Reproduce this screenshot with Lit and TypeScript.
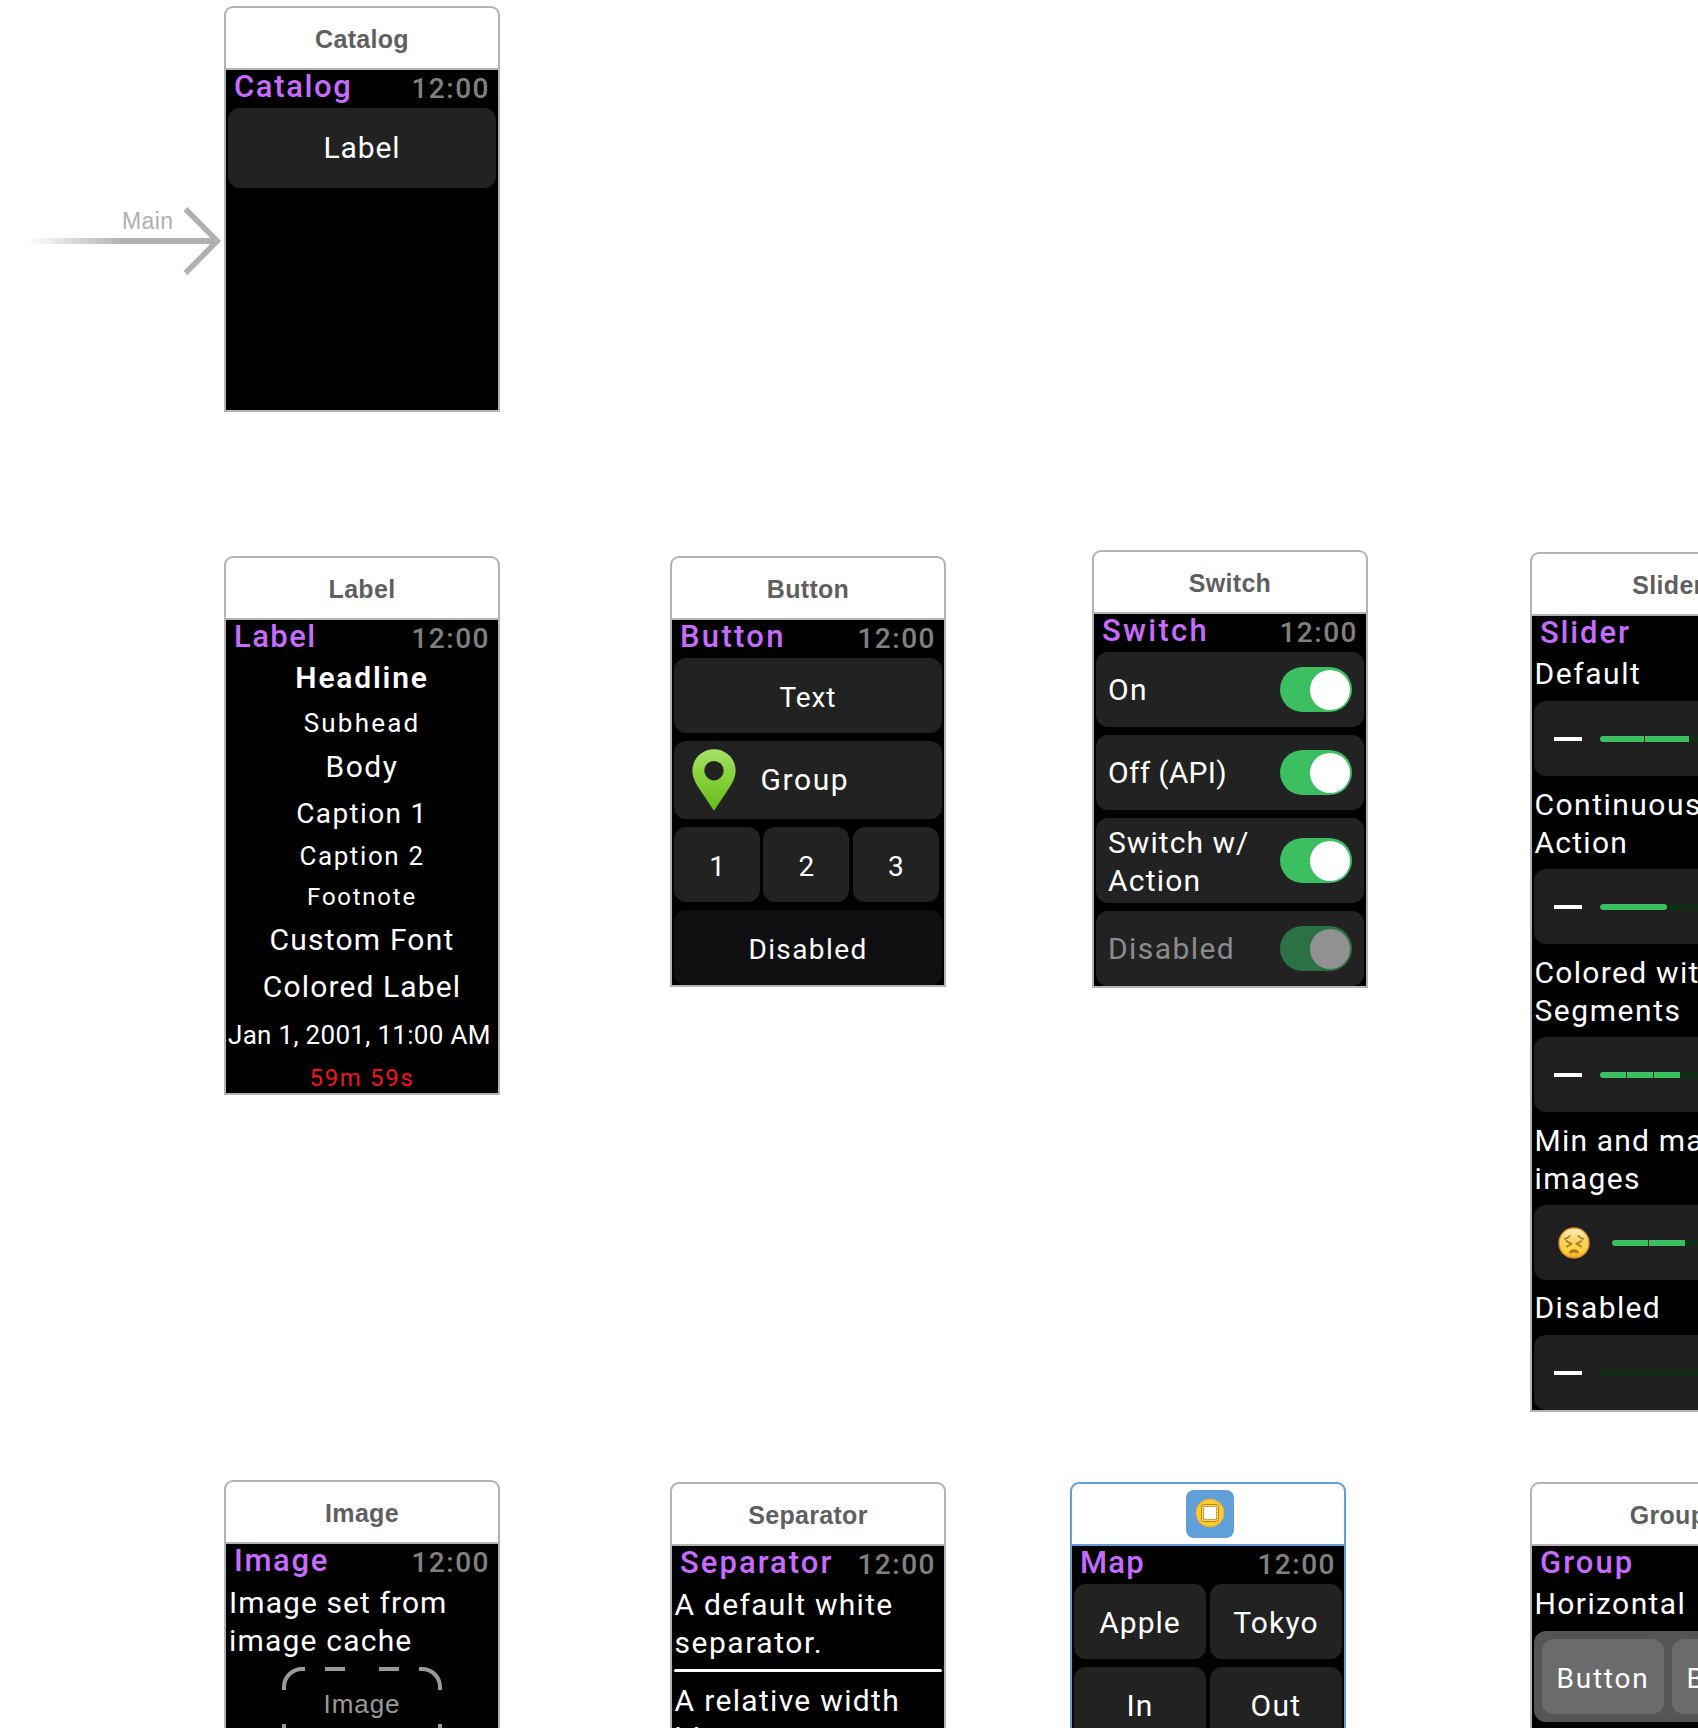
import { LitElement, html, svg, css, nothing, TemplateResult } from "lit";
import { customElement, property } from "lit/decorators.js";
import { classMap } from "lit/directives/class-map.js";
import { styleMap } from "lit/directives/style-map.js";

/** A run of text with its own tracking, in px. */
const run = (text: string, tracking: number) =>
  html`<span style=${styleMap({ letterSpacing: `${tracking}px` })}>${text}</span>`;

const pin = svg`
  <svg class="pin" viewBox="0 0 44 62">
    <defs>
      <linearGradient id="leaf" x1="0" y1="0" x2="0" y2="1">
        <stop offset="0" stop-color="#a5e267" />
        <stop offset="0.45" stop-color="#86d23a" />
        <stop offset="1" stop-color="#67ba1c" />
      </linearGradient>
    </defs>
    <path
      fill="url(#leaf)"
      fill-rule="evenodd"
      d="M22 0.3C9.8 0.3 0.4 9.800 0.4 21.700C0.4 28 3.500 34 7.500 40L22 61.800L36.500 40C40.500 34 43.600 28 43.600 21.700C43.600 9.800 34.200 0.300 22 0.300ZM22 12a9.700 9.700 0 1 1 0 19.400a9.700 9.700 0 1 1 0-19.400Z"
    />
  </svg>`;

const face = svg`
  <svg class="face" viewBox="0 0 32 32">
    <defs>
      <linearGradient id="skin" x1="0" y1="0" x2="0" y2="1">
        <stop offset="0" stop-color="#fff0c0" />
        <stop offset="0.4" stop-color="#fcd468" />
        <stop offset="0.8" stop-color="#fdcf3a" />
        <stop offset="1" stop-color="#f3a52c" />
      </linearGradient>
    </defs>
    <circle cx="16" cy="16" r="15" fill="url(#skin)" stroke="#e2902a" stroke-width="1.400" />
    <g fill="none" stroke="#a87a22" stroke-width="1.900" stroke-linecap="round" stroke-linejoin="round">
      <path d="M6.500 12C8.500 11.800 10.500 10.500 11.800 8.800" stroke-width="1.500" />
      <path d="M25.500 12C23.500 11.800 21.500 10.500 20.200 8.800" stroke-width="1.500" />
      <path d="M8.500 14L13.500 16.800L9 19.500" />
      <path d="M23.500 14L18.500 16.800L23 19.500" />
      <path d="M12 25.500C13 22.300 19 22.300 20 25.500L16 24.300Z" fill="#a87a22" />
    </g>
  </svg>`;

const controllerIcon = svg`
  <svg class="controller" viewBox="0 0 48 48">
    <circle cx="24" cy="23" r="14" fill="#ffcb34" stroke="#e9ad2e" stroke-width="1" />
    <rect x="15.500" y="14.500" width="17" height="17" rx="2" fill="#ffd75e" stroke="#b98b16" stroke-width="1" />
    <rect x="17.500" y="16.500" width="13" height="13" fill="#fff" stroke="#a8851f" stroke-width="1" stroke-dasharray="2 1" />
  </svg>`;

@customElement("scene-status")
export class SceneStatus extends LitElement {
  @property() name = "";
  @property({ type: Number }) tracking = 1.6;

  static styles = css`
    :host {
      display: flex;
      justify-content: space-between;
      align-items: flex-start;
      height: 38px;
      padding: 0 8px 0 8px;
      font-family: Roboto, sans-serif;
      font-weight: 500;
      white-space: nowrap;
    }
    .name {
      font-size: 31px;
      line-height: 34px;
      color: #c76bff;
    }
    .time {
      font-size: 28px;
      line-height: 38px;
      color: #808080;
      letter-spacing: 1.5px;
    }
  `;

  render() {
    return html`<div class="name">${run(this.name, this.tracking)}</div>
      <div class="time">12:00</div>`;
  }
}

@customElement("watch-slider")
export class WatchSlider extends LitElement {
  @property({ type: Number }) segments = 3;
  @property({ type: Number }) value = 0;
  @property({ type: Boolean }) continuous = false;
  @property({ type: Boolean }) images = false;

  static styles = css`
    :host {
      display: flex;
      align-items: center;
      box-sizing: border-box;
      height: 75px;
      margin: 0 2px;
      padding: 0 20px;
      border-radius: 12px;
      background: #1f1f1f;
    }
    .minus {
      flex: none;
      width: 28px;
      height: 4px;
      background: #fff;
    }
    .face {
      flex: none;
      width: 32px;
      height: 32px;
      margin: 0 2px 0 4px;
    }
    .bar {
      flex: 1;
      display: flex;
      gap: 1px;
      height: 6px;
      margin: 1px 20px 0 18px;
      border-radius: 3px;
      overflow: hidden;
    }
    .with-images {
      margin: 1px 22px 0 20px;
    }
    .solid {
      background: #0e2e18;
    }
    .segment {
      flex: 1;
      background: #0e2e18;
    }
    .filled {
      background: #3bbf60;
    }
    .fill {
      border-radius: 3px;
      background: #3bbf60;
    }
  `;

  render() {
    const cells = Array.from(
      { length: this.segments },
      (_, i) => html`<div class=${classMap({ segment: true, filled: i < this.value })}></div>`
    );
    return html`
      ${this.images ? face : html`<div class="minus"></div>`}
      <div class=${classMap({ bar: true, solid: this.continuous, "with-images": this.images })}>
        ${this.continuous
          ? html`<div class="fill" style=${styleMap({ width: `${this.value}%` })}></div>`
          : cells}
      </div>
      ${this.images ? face : html`<div class="minus"></div>`}
    `;
  }
}

@customElement("watch-scene")
export class WatchScene extends LitElement {
  @property() heading = "";
  @property({ type: Boolean }) selected = false;

  static styles = css`
    :host {
      display: flex;
      flex-direction: column;
      box-sizing: border-box;
      width: 276px;
      border: 2px solid #b3b3b3;
      border-radius: 9px 9px 0 0;
      background: #fff;
    }
    :host([selected]) {
      border-color: #619fd8;
    }
    .heading {
      display: flex;
      flex: none;
      align-items: center;
      justify-content: center;
      height: 60px;
      border-bottom: 2px solid #b3b3b3;
      font: 700 25px/28px "Liberation Sans", Arial, sans-serif;
      letter-spacing: 0.3px;
      color: #5f5f5f;
    }
    .heading span {
      padding-top: 2px;
    }
    :host([selected]) .heading {
      border-color: #619fd8;
    }
    .badge {
      width: 48px;
      height: 48px;
      margin-left: 4px;
      border-radius: 8px;
      background: #619fd8;
    }
    .controller {
      display: block;
      width: 48px;
      height: 48px;
    }
    .screen {
      flex: 1;
      background: #000;
    }
  `;

  render() {
    return html`
      <div class="heading">
        ${this.selected ? html`<div class="badge">${controllerIcon}</div>` : html`<span>${this.heading}</span>`}
      </div>
      <div class="screen"><slot></slot></div>
    `;
  }
}

interface Scene {
  x: number;
  y: number;
  height: number;
  name: string;
  tracking: number;
  selected?: boolean;
  body: TemplateResult;
}

const toggle = (disabled = false) =>
  html`<div class=${classMap({ toggle: true, dim: disabled })}><div class="knob"></div></div>`;

const lines = (kind: string, ...rows: [string, number][]) =>
  html`<div class="copy ${kind}">${rows.map(([t, ls]) => html`<div>${run(t, ls)}</div>`)}</div>`;

const SCENES: Scene[] = [
  {
    x: 224, y: 6, height: 406, name: "Catalog", tracking: 1.62,
    body: html`<div class="button tall">${run("Label", 0.9)}</div>`,
  },
  {
    x: 224, y: 556, height: 539, name: "Label", tracking: 1.45,
    body: html`<div class="labels">
      <div class="headline">${run("Headline", 1.8)}</div>
      <div class="subhead">${run("Subhead", 2.2)}</div>
      <div class="body">${run("Body", 1.56)}</div>
      <div class="caption1">${run("Caption 1", 1.35)}</div>
      <div class="caption2">${run("Caption 2", 1.61)}</div>
      <div class="footnote">${run("Footnote", 1.75)}</div>
      <div class="custom">${run("Custom Font", 1.2)}</div>
      <div class="colored">${run("Colored Label", 1.12)}</div>
      <div class="date">${run("Jan 1, 2001, 11:00 AM", 0.3)}</div>
      <div class="timer">${run("59m 59s", 1.65)}</div>
    </div>`,
  },
  {
    x: 670, y: 556, height: 431, name: "Button", tracking: 2.3,
    body: html`<div class="stack">
      <div class="button small">${run("Text", 0.9)}</div>
      <div class="button group">${pin}${run("Group", 1.6)}</div>
      <div class="thirds">
        <div class="button small">1</div>
        <div class="button small">2</div>
        <div class="button small">3</div>
      </div>
      <div class="button small off">${run("Disabled", 1.4)}</div>
    </div>`,
  },
  {
    x: 1092, y: 550, height: 438, name: "Switch", tracking: 2.25,
    body: html`<div class="stack">
      <div class="row"><div>${run("On", 1.4)}</div>${toggle()}</div>
      <div class="row"><div>${run("Off (API)", 0.3)}</div>${toggle()}</div>
      <div class="row double">
        <div><div>${run("Switch w/", 1.05)}</div><div>${run("Action", 1.2)}</div></div>
        ${toggle()}
      </div>
      <div class="row faded"><div>${run("Disabled", 1.41)}</div>${toggle(true)}</div>
    </div>`,
  },
  {
    x: 1530, y: 552, height: 860, name: "Slider", tracking: 1.85,
    body: html`
      ${lines("first", ["Default", 1.55])}
      <watch-slider segments="3" value="2"></watch-slider>
      ${lines("pair", ["Continuous w/", 1.49], ["Action", 1.25])}
      <watch-slider continuous value="50"></watch-slider>
      ${lines("pair", ["Colored with", 1.3], ["Segments", 1.55])}
      <watch-slider segments="5" value="3"></watch-slider>
      ${lines("pair", ["Min and max", 1.2], ["images", 1.35])}
      <watch-slider images segments="3" value="2"></watch-slider>
      ${lines("single", ["Disabled", 1.35])}
      <watch-slider segments="3" value="0"></watch-slider>
    `,
  },
  {
    x: 224, y: 1480, height: 400, name: "Image", tracking: 1.65,
    body: html`
      ${lines("lead", ["Image set from", 1.08], ["image cache", 1.2])}
      <div class="placeholder">
        <svg class="dashes" viewBox="0 0 160 140">
          <path d="M2 23V20A18 18 0 0 1 20 2H23M43 2h20M97 2h20M137 2H140A18 18 0 0 1 158 20V23M2 57v24M158 57v24" />
        </svg>
        <span>Image</span>
      </div>
    `,
  },
  {
    x: 670, y: 1482, height: 400, name: "Separator", tracking: 2.03,
    body: html`
      ${lines("tight", ["A default white", 1.28], ["separator.", 1.54])}
      <div class="separator"></div>
      ${lines("after", ["A relative width", 1.33], ["blue separator.", 1.4])}
    `,
  },
  {
    x: 1070, y: 1482, height: 400, name: "Map", tracking: 1.2, selected: true,
    body: html`<div class="halves">
      <div class="button nudge">${run("Apple", 1.04)}</div>
      <div class="button nudge">${run("Tokyo", 1.1)}</div>
      <div class="button nudge">${run("In", 1.2)}</div>
      <div class="button nudge">${run("Out", 1.41)}</div>
    </div>`,
  },
  {
    x: 1530, y: 1482, height: 400, name: "Group", tracking: 2.06,
    body: html`
      ${lines("first", ["Horizontal", 1.4])}
      <div class="tray">
        <div class="button small light">${run("Button", 1.76)}</div>
        <div class="button small light">${run("Button", 1.76)}</div>
      </div>
    `,
  },
];

@customElement("app-root")
export class AppRoot extends LitElement {
  static styles = css`
    :host {
      display: block;
      width: 1698px;
      height: 1730px;
      overflow: hidden;
      background: #fff;
    }
    .canvas {
      position: relative;
      height: 1728px;
      overflow: hidden;
      font: 400 30px/38px Roboto, sans-serif;
      color: #fff;
      white-space: nowrap;
    }
    .scene {
      position: absolute;
    }
    .entry {
      position: absolute;
      left: 26px;
      top: 204px;
      width: 198px;
      height: 74px;
    }
    .entry-name {
      position: absolute;
      left: 122px;
      top: 208px;
      font: 400 23px/26px "Liberation Sans", Arial, sans-serif;
      letter-spacing: 0.4px;
      color: #b0b0b0;
    }

    .button {
      display: flex;
      align-items: center;
      justify-content: center;
      box-sizing: border-box;
      height: 75px;
      border-radius: 12px;
      background: #222;
    }
    .tall {
      height: 80px;
      margin: 0 2px;
    }
    .small {
      padding-top: 4px;
      font-size: 28px;
    }
    .nudge {
      padding-top: 2px;
    }
    .off {
      background: #0f0f11;
    }
    .light {
      background: #6b6b6b;
    }
    .stack {
      display: flex;
      flex-direction: column;
      gap: 8px;
      padding: 0 2px;
    }
    .group {
      justify-content: flex-start;
      gap: 25px;
      height: 78px;
      padding-left: 17.5px;
    }
    .pin {
      width: 44px;
      height: 62px;
    }
    .thirds {
      display: grid;
      grid-template-columns: repeat(3, 86px);
      gap: 3.4px;
    }
    .halves {
      display: grid;
      grid-template-columns: 132px 132px;
      gap: 8px 4px;
      padding: 0 2px;
    }

    .labels {
      display: flex;
      flex-direction: column;
      align-items: center;
      line-height: 36px;
    }
    .headline {
      margin-top: 2px;
      font-weight: 600;
    }
    .subhead {
      margin-top: 11px;
      font-size: 26px;
      line-height: 32px;
    }
    .body {
      margin-top: 10px;
    }
    .caption1 {
      margin-top: 12px;
      font-size: 28px;
      line-height: 34px;
    }
    .caption2 {
      margin-top: 9px;
      font-size: 26px;
      line-height: 32px;
    }
    .footnote {
      margin-top: 10px;
      font-size: 24px;
      line-height: 30px;
    }
    .custom {
      margin-top: 10px;
    }
    .colored {
      margin-top: 11px;
    }
    .date {
      align-self: flex-start;
      margin: 14px 0 0 2px;
      font-size: 26px;
      line-height: 32px;
    }
    .timer {
      margin-top: 12px;
      font-size: 24px;
      line-height: 30px;
      color: #f5141b;
    }

    .row {
      display: flex;
      align-items: center;
      justify-content: space-between;
      box-sizing: border-box;
      height: 75px;
      padding: 0 12px;
      border-radius: 12px;
      background: #222;
    }
    .double {
      height: 85px;
    }
    .double > div:first-child {
      padding-top: 2px;
    }
    .faded {
      color: #8b8b8f;
    }
    .toggle {
      display: flex;
      align-items: center;
      justify-content: flex-end;
      box-sizing: border-box;
      width: 72px;
      height: 45px;
      padding-right: 2px;
      border-radius: 23px;
      background: #3bbf60;
    }
    .double > .toggle {
      padding-top: 0;
    }
    .knob {
      width: 40px;
      height: 40px;
      border-radius: 50%;
      background: #fff;
    }
    .dim {
      background: #2c7143;
    }
    .dim .knob {
      background: #919191;
    }

    .copy {
      padding: 0 2.5px;
    }
    .first {
      padding-top: 1px;
      padding-bottom: 8px;
    }
    .pair {
      padding-top: 10px;
      padding-bottom: 7px;
    }
    .single {
      padding-top: 9px;
      padding-bottom: 8px;
    }
    .lead {
      padding: 2px 2px 7px 3px;
    }
    .tight {
      padding-top: 2px;
      padding-bottom: 7px;
    }
    .after {
      padding-top: 10px;
    }
    .separator {
      height: 3px;
      margin: 0 2px;
      border-radius: 2px;
      background: #fff;
    }
    .placeholder {
      display: grid;
      justify-content: center;
      width: 160px;
      height: 140px;
      margin: 0 auto;
      font: 400 26px/30px "Liberation Sans", Arial, sans-serif;
      letter-spacing: 0.9px;
      color: #999;
    }
    .placeholder > * {
      grid-area: 1 / 1;
    }
    .placeholder span {
      padding-top: 22px;
      justify-self: center;
    }
    .dashes {
      width: 160px;
      height: 140px;
      fill: none;
      stroke: #999;
      stroke-width: 4;
    }
    .tray {
      display: grid;
      grid-template-columns: 122px 122px;
      gap: 8px;
      margin: 0 2px;
      padding: 8px;
      border-radius: 12px;
      background: #555;
    }
  `;

  render() {
    return html`
      <div class="canvas">
        <svg class="entry" viewBox="0 0 198 74">
          <defs>
            <linearGradient id="fade" gradientUnits="userSpaceOnUse" x1="2" y1="0" x2="98" y2="0">
              <stop offset="0" stop-color="#b0b0b0" stop-opacity="0" />
              <stop offset="1" stop-color="#b0b0b0" />
            </linearGradient>
          </defs>
          <rect x="2" y="34" width="188" height="6" fill="url(#fade)" />
          <path d="M159.500 5L191.200 37L159.500 69" fill="none" stroke="#b0b0b0" stroke-width="5.500" />
        </svg>
        <div class="entry-name">Main</div>
        ${SCENES.map(
          (s) => html`
            <watch-scene
              class="scene"
              .heading=${s.name}
              ?selected=${s.selected ?? false}
              style=${styleMap({ left: `${s.x}px`, top: `${s.y}px`, height: `${s.height}px` })}
            >
              <scene-status .name=${s.name} .tracking=${s.tracking}></scene-status>
              ${s.body ?? nothing}
            </watch-scene>
          `
        )}
      </div>
    `;
  }
}
